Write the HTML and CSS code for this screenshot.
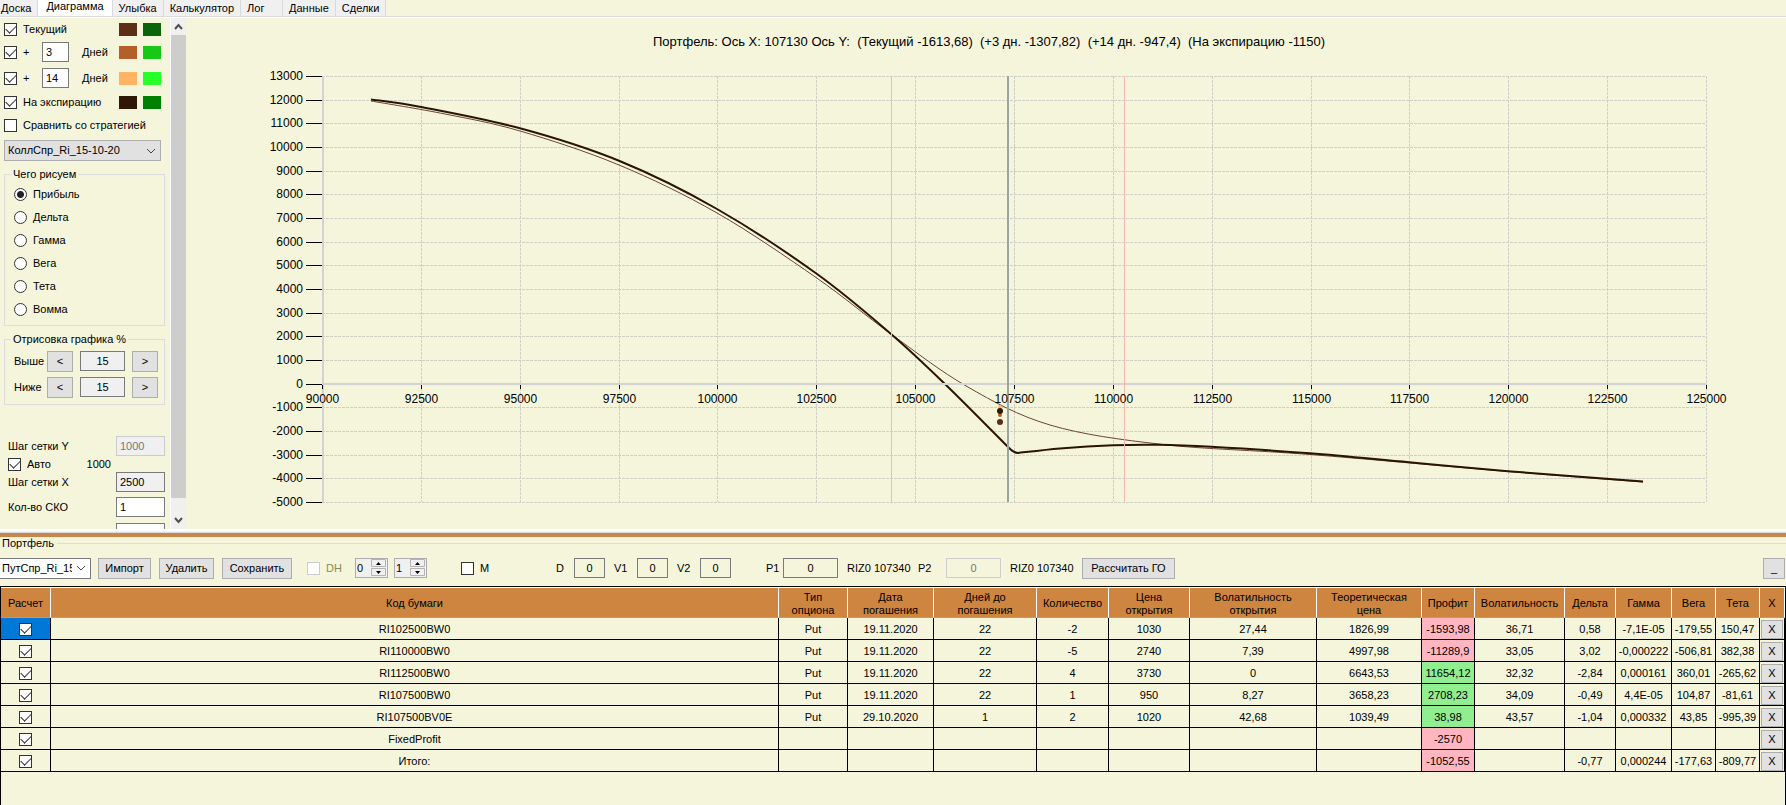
FILE: index.html
```
<!DOCTYPE html>
<html lang="ru">

<head>
  <meta charset="UTF-8">
  <meta name="viewport" content="width=device-width, initial-scale=1.0">
  <title>Портфель</title>
  <link rel="stylesheet" href="styles.css">
</head>

<body>
  <nav class="tabs">
    <button class="tab first">Доска</button>
    <button class="tab active">Диаграмма</button>
    <button class="tab">Улыбка</button>
    <button class="tab">Калькулятор</button>
    <button class="tab short">Лог</button>
    <button class="tab">Данные</button>
    <button class="tab">Сделки</button>
  </nav>

  <main class="main">
    <aside class="sidebar">
      <div class="line line-now">
        <label><input type="checkbox" checked> Текущий</label>
        <span class="swatch now-a"></span><span class="swatch now-b"></span>
      </div>
      <div class="line line-first">
        <label><input type="checkbox" checked> +</label>
        <input class="box days" type="text" value="3" aria-label="Дней 1">
        <span class="unit">Дней</span>
        <span class="swatch first-a"></span><span class="swatch first-b"></span>
      </div>
      <div class="line line-second">
        <label><input type="checkbox" checked> +</label>
        <input class="box days" type="text" value="14" aria-label="Дней 2">
        <span class="unit">Дней</span>
        <span class="swatch second-a"></span><span class="swatch second-b"></span>
      </div>
      <div class="line line-exp">
        <label><input type="checkbox" checked> На экспирацию</label>
        <span class="swatch exp-a"></span><span class="swatch exp-b"></span>
      </div>
      <div class="line line-compare">
        <label><input type="checkbox"> Сравнить со стратегией</label>
      </div>
      <select class="strategy" aria-label="Стратегия">
        <option>КоллСпр_Ri_15-10-20</option>
      </select>

      <fieldset class="group">
        <legend>Чего рисуем</legend>
        <label class="choice"><input type="radio" name="what" checked> Прибыль</label>
        <label class="choice"><input type="radio" name="what"> Дельта</label>
        <label class="choice"><input type="radio" name="what"> Гамма</label>
        <label class="choice"><input type="radio" name="what"> Вега</label>
        <label class="choice"><input type="radio" name="what"> Тета</label>
        <label class="choice"><input type="radio" name="what"> Вомма</label>
      </fieldset>

      <fieldset class="group">
        <legend>Отрисовка графика %</legend>
        <div class="range">
          <label for="above">Выше</label>
          <button class="btn">&lt;</button>
          <input class="box gray" id="above" type="text" value="15">
          <button class="btn">&gt;</button>
        </div>
        <div class="range">
          <label for="below">Ниже</label>
          <button class="btn">&lt;</button>
          <input class="box gray" id="below" type="text" value="15">
          <button class="btn">&gt;</button>
        </div>
      </fieldset>

      <div class="steps">
        <div class="step"><label for="stepY">Шаг сетки Y</label><input class="box" id="stepY" type="text" value="1000" disabled></div>
        <div class="step auto"><label><input type="checkbox" checked> Авто</label><span>1000</span></div>
        <div class="step"><label for="stepX">Шаг сетки X</label><input class="box gray" id="stepX" type="text" value="2500"></div>
        <div class="step tall"><label for="sko">Кол-во СКО</label><input class="box" id="sko" type="text" value="1"></div>
        <div class="step tall"><label for="more"></label><input class="box" id="more" type="text" value="" aria-label="Параметр"></div>
      </div>
    </aside>

    <div class="scroll">
      <svg viewBox="0 0 15 17"><path d="M4 11 L7.500 7 L11 11" /></svg>
      <div class="thumb"></div>
      <svg class="bottom" viewBox="0 0 15 17"><path d="M4 6 L7.500 10 L11 6" /></svg>
    </div>

    <svg class="chart" id="chart" viewBox="186 18 1600 511"></svg>
  </main>

  <section class="portfolio">
    <h2 class="caption">Портфель</h2>
    <div class="toolbar">
      <select class="portfolio-name" aria-label="Портфель">
        <option>ПутСпр_Ri_15-10-20</option>
      </select>
      <button class="btn import">Импорт</button>
      <button class="btn delete">Удалить</button>
      <button class="btn save">Сохранить</button>
      <label class="dh"><input type="checkbox" disabled> DH</label>
      <div class="spin">
        <input type="text" value="0" aria-label="DH 1">
        <svg viewBox="0 0 16 18"><path class="half" d="M.5 .5h14v7h-14z M.5 9.500h14v7h-14z" /><path d="M5 6h5L7.500 3z M5 12h5L7.500 15z" /></svg>
      </div>
      <div class="spin">
        <input type="text" value="1" aria-label="DH 2">
        <svg viewBox="0 0 16 18"><path class="half" d="M.5 .5h14v7h-14z M.5 9.500h14v7h-14z" /><path d="M5 6h5L7.500 3z M5 12h5L7.500 15z" /></svg>
      </div>
      <label class="m"><input type="checkbox"> M</label>
      <div class="greeks">
        <label>D <input class="box" type="text" value="0"></label>
        <label>V1 <input class="box" type="text" value="0"></label>
        <label>V2 <input class="box" type="text" value="0"></label>
      </div>
      <label class="price">P1 <input class="box" type="text" value="0"></label>
      <span class="ticker">RIZ0 107340</span>
      <label class="price second">P2 <input class="box" type="text" value="0" disabled></label>
      <span class="ticker">RIZ0 107340</span>
      <button class="btn margin">Рассчитать ГО</button>
      <button class="btn collapse">_</button>
    </div>

    <div class="grid">
      <table>
        <colgroup>
          <col class="w50"><col><col class="w69"><col class="w86"><col class="w103"><col class="w72"><col class="w81"><col class="w127"><col class="w105"><col class="w53"><col class="w90"><col class="w51"><col class="w56"><col class="w44"><col class="w44"><col class="w25">
        </colgroup>
        <thead>
          <tr>
            <th>Расчет</th><th>Код бумаги</th><th>Тип<br>опциона</th><th>Дата<br>погашения</th><th>Дней до<br>погашения</th><th>Количество</th><th>Цена<br>открытия</th><th>Волатильность<br>открытия</th><th>Теоретическая<br>цена</th><th>Профит</th><th>Волатильность</th><th>Дельта</th><th>Гамма</th><th>Вега</th><th>Тета</th><th>X</th>
          </tr>
        </thead>
        <tbody id="rows"></tbody>
      </table>
    </div>
  </section>

  <script src="script.js"></script>
</body>

</html>
```
FILE: styles.css
```
* {
  box-sizing: border-box;
}

body {
  margin: 0;
  min-height: 100vh;
  display: flex;
  flex-direction: column;
  background: #f5f5dc;
  color: #000;
  font-family: "Liberation Sans", Arial, sans-serif;
  font-size: 11px;
  line-height: 13px;
}

button,
input,
select {
  font: inherit;
  color: inherit;
  margin: 0;
}

/* tabs */

.tabs {
  display: flex;
  height: 17px;
  border-bottom: 1px solid #dcdcdc;
}

.tab {
  background: #f0f0f0;
  border: 0;
  border-right: 1px solid #d9d9d9;
  padding: 0 6px;
  text-align: left;
}

.tab.first {
  padding: 0 6px 0 1px;
}

.tab.active {
  background: #fff;
  padding: 0 8px 4px;
}

.tab.short {
  width: 42px;
}

/* controls */

input[type=checkbox],
input[type=radio] {
  appearance: none;
  flex: none;
  width: 13px;
  height: 13px;
  background: #fff;
  border: 1px solid #333;
}

input[type=radio] {
  border-radius: 50%;
}

input[type=radio]:checked {
  background: radial-gradient(circle, #222 3px, #fff 4px);
}

input[type=checkbox]:checked {
  display: grid;
  place-items: center;
}

input[type=checkbox]:checked::before {
  content: "";
  width: 9px;
  height: 5px;
  border: solid #333;
  border-width: 0 0 1px 1px;
  rotate: -45deg;
  margin-bottom: 3px;
}

input[type=checkbox]:disabled {
  border-color: #ccc;
}

.box {
  width: 49px;
  height: 20px;
  padding: 0 3px;
  border: 1px solid #7a7a7a;
  border-radius: 0;
  background: #fff;
}

.box.gray {
  background: #f0f0f0;
}

.box:disabled {
  background: #f0f0f0;
  border-color: #ccc;
  color: #777;
}

.btn {
  height: 21px;
  padding: 0;
  border: 1px solid #adadad;
  border-radius: 0;
  background: #e1e1e1;
}

select {
  appearance: none;
  border: 1px solid #7a7a7a;
  border-radius: 0;
  padding: 0 18px 0 3px;
  background: #fff url("data:image/svg+xml,%3Csvg xmlns='http://www.w3.org/2000/svg' width='17' height='10'%3E%3Cpath d='M4 3l4 4 4-4' fill='none' stroke='%23444'/%3E%3C/svg%3E") no-repeat right center;
}

/* chart page */

.main {
  display: flex;
  border-top: 1px solid #fff;
  border-bottom: 2px solid #fff;
}

.sidebar {
  flex: none;
  width: 170px;
  padding-left: 4px;
  overflow: hidden;
  contain: size;
}

.line {
  display: flex;
  align-items: center;
  width: 157px;
}

.line label {
  display: flex;
  align-items: center;
  gap: 6px;
  margin-right: auto;
}

.line-now {
  height: 22px;
}

.line-first {
  height: 24px;
}

.line-second {
  height: 28px;
}

.line-exp {
  height: 20px;
}

.line-compare {
  height: 26px;
}

.days {
  width: 27px;
}

.unit {
  width: 37px;
  margin-left: 13px;
}

.swatch {
  width: 18px;
  height: 13px;
}

.swatch + .swatch {
  margin-left: 6px;
}

.now-a { background: #5c2e16; }
.now-b { background: #0a640a; }
.first-a { background: #b45f28; }
.first-b { background: #17c817; }
.second-a { background: #ffb464; }
.second-b { background: #28ff28; }
.exp-a { background: #2f1804; }
.exp-b { background: #008000; }

.strategy {
  display: block;
  width: 157px;
  height: 21px;
  margin-top: 2px;
  border-color: #adadad;
  background-color: #e1e1e1;
}

.group {
  width: 161px;
  min-width: 0;
  margin: 7px 0 0;
  padding: 2px 6px 4px 9px;
  border: 1px solid #dcdcdc;
}

.group legend {
  padding: 0 2px;
  margin-left: -3px;
}

.choice {
  display: flex;
  align-items: center;
  gap: 6px;
  height: 23px;
}

.range {
  display: flex;
  align-items: center;
  height: 26px;
}

.range label {
  width: 33px;
}

.range .btn {
  width: 26px;
}

.range .box {
  width: 45px;
  margin: 0 7px;
  text-align: center;
}

.steps {
  margin: 29px 0 0 4px;
  width: 157px;
}

.step {
  display: flex;
  align-items: center;
  justify-content: space-between;
  height: 24px;
}

.step.tall {
  height: 26px;
}

.step.auto {
  height: 12px;
  padding-right: 54px;
}

.step.auto label {
  display: flex;
  gap: 6px;
}

.scroll {
  flex: none;
  display: flex;
  flex-direction: column;
  width: 16px;
  background: #f0f0f0;
  border-left: 1px solid #fff;
}

.scroll svg {
  height: 17px;
  fill: none;
  stroke: #505050;
  stroke-width: 2;
}

.thumb {
  flex: 1;
  background: #cdcdcd;
}

.scroll .bottom {
  margin-top: 14px;
}

.chart {
  display: block;
  flex: 1;
  min-width: 0;
}

.chart text {
  font-size: 12px;
}

.chart .title {
  font-size: 13px;
  text-anchor: middle;
  white-space: pre;
}

.chart .y-label {
  text-anchor: end;
}

.chart .x-label {
  text-anchor: middle;
}

.chart .mesh {
  stroke: #cfcfc4;
  stroke-dasharray: 3 1;
}

.chart .axis {
  stroke: #d3d3d3;
  stroke-width: 2;
}

.chart .tick {
  stroke: #000;
}

.chart .sigma {
  stroke: #f8b8b0;
}

.chart .price-line {
  stroke: #9aa5a0;
  stroke-width: 2;
}

.chart path {
  fill: none;
}

.chart .now {
  stroke: #6b4530;
}

.chart .exp {
  stroke: #2a1503;
  stroke-width: 2;
}

/* portfolio */

.portfolio {
  flex: 1;
  display: flex;
  flex-direction: column;
  border-top: 4px solid #c8864b;
  outline: 1px solid #dcdcdc;
  margin-top: 2px;
}

.caption {
  display: flex;
  align-items: center;
  gap: 3px;
  margin: 0 0 0 2px;
  font-size: 11px;
  font-weight: normal;
}

.caption::after {
  content: "";
  flex: 1;
  height: 1px;
  background: #dcdcdc;
}

.toolbar {
  display: flex;
  align-items: center;
  height: 36px;
}

.toolbar .box {
  background: #f5f5dc;
  text-align: center;
}

.portfolio-name {
  width: 91px;
  height: 21px;
  border-left: 0;
  padding-left: 2px;
}

.import {
  width: 53px;
  margin-left: 7px;
}

.delete {
  width: 55px;
  margin-left: 8px;
}

.save {
  width: 70px;
  margin-left: 8px;
}

.dh,
.m {
  display: flex;
  align-items: center;
  gap: 6px;
}

.dh {
  width: 42px;
  margin: 0 6px 0 15px;
  color: #8a8a4c;
}

.m {
  width: 95px;
  margin-left: 28px;
}

.spin {
  display: flex;
  width: 33px;
  height: 20px;
  margin-right: 6px;
  border: 1px solid #adadad;
}

.spin input {
  width: 15px;
  border: 0;
  padding: 0 1px;
  background: #f0f0f0;
}

.spin svg {
  width: 16px;
  background: #f0f0f0;
}

.spin .half {
  fill: #f0f0f0;
  stroke: #b4b4b4;
}

.greeks {
  display: flex;
  gap: 9px;
}

.greeks label,
.price {
  display: flex;
  align-items: center;
  justify-content: space-between;
}

.greeks label {
  width: 54px;
}

.greeks label:first-child {
  width: 49px;
}

.greeks .box {
  width: 31px;
}

.price {
  width: 72px;
  margin-left: 35px;
}

.price .box {
  width: 55px;
}

.price.second {
  width: 83px;
  margin-left: 8px;
}

.ticker {
  width: 63px;
  margin-left: 9px;
  white-space: nowrap;
}

.margin {
  width: 93px;
  margin-left: 9px;
}

.collapse {
  width: 22px;
  margin-left: auto;
  margin-right: 1px;
}

/* table */

.grid {
  flex: 1;
  border: 1px solid #000;
  border-bottom: 0;
}

table {
  width: 100%;
  table-layout: fixed;
  border-collapse: separate;
  border-spacing: 0;
}

th {
  height: 31px;
  padding: 2px 0 0;
  font-weight: normal;
  background: #cd853f;
  border-top: 1px solid #fff;
  border-right: 1px solid #fff;
  border-bottom: 1px solid #a0a0a0;
}

td {
  height: 22px;
  padding: 1px 0 0;
  text-align: center;
  border-right: 1px solid #000;
  border-bottom: 1px solid #000;
}

td input[type=checkbox]:checked {
  margin: 0 auto;
}

td .btn {
  display: block;
  width: 22px;
  height: 19px;
  margin: 0 auto;
}

.selected { background: #0078d7; }
.loss { background: #ffb6c1; }
.gain { background: #90ee90; }

.w25 { width: 25px; }
.w44 { width: 44px; }
.w50 { width: 50px; }
.w51 { width: 51px; }
.w53 { width: 53px; }
.w56 { width: 56px; }
.w69 { width: 69px; }
.w72 { width: 72px; }
.w81 { width: 81px; }
.w86 { width: 86px; }
.w90 { width: 90px; }
.w103 { width: 103px; }
.w105 { width: 105px; }
.w127 { width: 127px; }
```
FILE: script.js
```
const rows = [
  ['RI102500BW0', 'Put', '19.11.2020', '22', '-2', '1030', '27,44', '1826,99', '-1593,98', '36,71', '0,58', '-7,1E-05', '-179,55', '150,47'],
  ['RI110000BW0', 'Put', '19.11.2020', '22', '-5', '2740', '7,39', '4997,98', '-11289,9', '33,05', '3,02', '-0,000222', '-506,81', '382,38'],
  ['RI112500BW0', 'Put', '19.11.2020', '22', '4', '3730', '0', '6643,53', '11654,12', '32,32', '-2,84', '0,000161', '360,01', '-265,62'],
  ['RI107500BW0', 'Put', '19.11.2020', '22', '1', '950', '8,27', '3658,23', '2708,23', '34,09', '-0,49', '4,4E-05', '104,87', '-81,61'],
  ['RI107500BV0E', 'Put', '29.10.2020', '1', '2', '1020', '42,68', '1039,49', '38,98', '43,57', '-1,04', '0,000332', '43,85', '-995,39'],
  ['FixedProfit', '', '', '', '', '', '', '', '-2570', '', '', '', '', ''],
  ['Итого:', '', '', '', '', '', '', '', '-1052,55', '', '-0,77', '0,000244', '-177,63', '-809,77']
];

const PROFIT = 8;

document.getElementById('rows').innerHTML = rows.map((row, n) => {
  const cells = row.map((value, i) => {
    const cls = i === PROFIT ? (value[0] === '-' ? ' class="loss"' : ' class="gain"') : '';
    return `<td${cls}>${value}</td>`;
  }).join('');
  return `<tr><td${n === 0 ? ' class="selected"' : ''}><input type="checkbox" checked aria-label="${row[0]}"></td>${cells}<td><button class="btn">X</button></td></tr>`;
}).join('');

// chart scales
const left = 322, right = 1706, top_ = 76, bottom = 502;
const sx = v => Math.round(left + (v - 90000) / 35000 * (right - left)) + 0.5;
const sy = v => Math.round(top_ + (13000 - v) / 18000 * (bottom - top_)) + 0.5;

const line = (cls, x1, y1, x2, y2) => `<line class="${cls}" x1="${x1}" y1="${y1}" x2="${x2}" y2="${y2}"/>`;
const text = (cls, x, y, s) => `<text class="${cls}" x="${x}" y="${y}">${s}</text>`;

// smooth curve through the points
const curve = pts => {
  let d = '';
  for (let i = 0; i < pts.length - 1; i++) {
    const p0 = pts[i - 1] || pts[i], p1 = pts[i], p2 = pts[i + 1], p3 = pts[i + 2] || p2;
    d += ` C${p1[0] + (p2[0] - p0[0]) / 6} ${p1[1] + (p2[1] - p0[1]) / 6} ${p2[0] - (p3[0] - p1[0]) / 6} ${p2[1] - (p3[1] - p1[1]) / 6} ${p2[0]} ${p2[1]}`;
  }
  return d;
};

const now = [[371, 101], [445, 114], [520, 131], [619, 165], [717, 213], [816, 277.5], [891, 334], [967, 386.5], [1050, 425], [1163, 444.5], [1310, 454.5], [1508, 471.5], [1643, 482]];
const fall = [[371, 99.5], [421, 107], [520, 128.3], [619, 160.8], [717, 209], [816, 273.3], [891, 334], [947, 386], [1008, 447]];
const tail = [[1018, 453], [1060, 448.5], [1113, 445.3], [1158, 444.8], [1211, 446.8], [1310, 453.3], [1409, 462.3], [1508, 471.2], [1643, 481.5]];

let out = text('title', 989, 46, 'Портфель: Ось X: 107130 Ось Y:  (Текущий -1613,68)  (+3 дн. -1307,82)  (+14 дн. -947,4)  (На экспирацию -1150)');

for (let v = 92500; v <= 125000; v += 2500) out += line('mesh', sx(v), top_, sx(v), bottom);
for (let v = -5000; v <= 13000; v += 1000) out += line('mesh', left, sy(v), right, sy(v));

out += `<path class="now" d="M371 101${curve(now)}"/>`;
out += `<path class="exp" d="M371 99.5${curve(fall)} Q1014 453 1018 453${curve(tail)}"/>`;
out += line('axis', left + 1, top_, left + 1, bottom) + line('axis', left, 384, right, 384);
out += line('sigma', 891.5, top_, 891.5, bottom) + line('sigma', 1124.5, top_, 1124.5, bottom);
out += line('price-line', 1008, top_, 1008, bottom);

for (let v = -5000; v <= 13000; v += 1000) {
  out += line('tick', 306, sy(v), left, sy(v)) + text('y-label', 303, sy(v) + 3.5, v);
}
for (let v = 90000; v <= 125000; v += 2500) {
  out += line('tick', sx(v), 385, sx(v), 389) + text('x-label', sx(v), 403, v);
}

out += '<circle cx="1000" cy="407" r="2" fill="#ffb464"/><circle cx="1000" cy="415" r="2" fill="#b45f28"/>';
out += '<circle cx="1000" cy="411" r="3" fill="#2f1804"/><circle cx="1000" cy="422" r="3" fill="#5c2e16"/>';

document.getElementById('chart').innerHTML = out;
```
